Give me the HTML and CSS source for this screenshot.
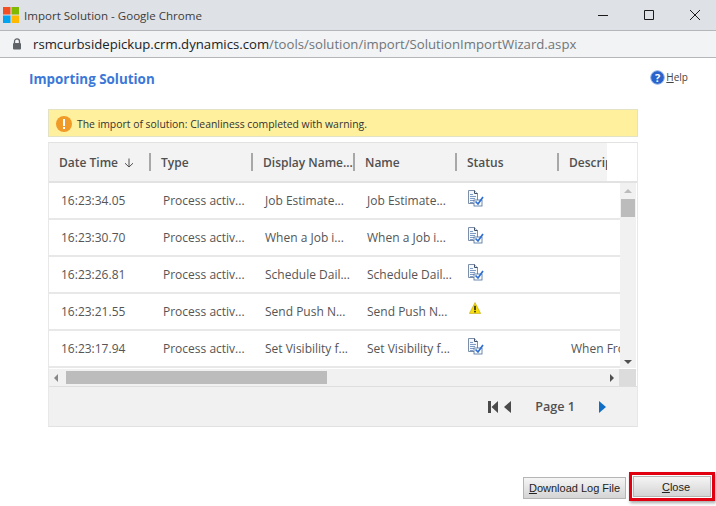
FILE: index.html
```html
<!DOCTYPE html>
<html lang="en">
<head>
    <meta charset="UTF-8">
    <title>Import Solution - Google Chrome</title>
    <link rel="stylesheet" href="styles.css">
</head>
<body>
    <div class="titlebar">
        <svg class="ms-logo" width="16" height="16" viewBox="0 0 16 16">
            <rect x="0" y="0" width="7.5" height="7.5" fill="#f25022"/>
            <rect x="8.5" y="0" width="7.5" height="7.5" fill="#7fba00"/>
            <rect x="0" y="8.5" width="7.5" height="7.5" fill="#00a4ef"/>
            <rect x="8.5" y="8.5" width="7.5" height="7.5" fill="#ffb900"/>
        </svg>
        <span class="window-title">Import Solution - Google Chrome</span>
        <div class="window-buttons">
            <svg width="12" height="12" viewBox="0 0 12 12"><path d="M1 6.5h10" stroke="#1a1a1a" fill="none"/></svg>
            <svg width="12" height="12" viewBox="0 0 12 12"><path d="M1.5 1.5h9v9h-9z" stroke="#1a1a1a" fill="none"/></svg>
            <svg width="12" height="12" viewBox="0 0 12 12"><path d="M1 1l10 10M11 1L1 11" stroke="#1a1a1a" fill="none"/></svg>
        </div>
    </div>
    <div class="addressbar">
        <svg class="lock" width="10" height="12" viewBox="0 0 10 12">
            <path d="M2.5 5V3.4a2.5 2.5 0 0 1 5 0V5" stroke="#5f6368" stroke-width="1.3" fill="none"/>
            <rect x="1" y="5" width="8" height="6.5" rx="1" fill="#5f6368"/>
        </svg>
        <span class="url"><span class="url-host">rsmcurbsidepickup.crm.dynamics.com</span>/tools/solution/import/SolutionImportWizard.aspx</span>
    </div>

    <div class="page">
        <div class="page-head">
            <h1>Importing Solution</h1>
            <a class="help" href="#">
                <svg width="15" height="15" viewBox="0 0 15 15">
                    <circle cx="7.5" cy="7.5" r="6.8" fill="#2a63c9" stroke="#8fb2ea"/>
                    <text x="7.5" y="11.5" class="help-mark">?</text>
                </svg>
                <span><u>H</u>elp</span>
            </a>
        </div>

        <div class="banner">
            <svg width="16" height="16" viewBox="0 0 16 16">
                <circle cx="8" cy="8" r="8" fill="#f09a27"/>
                <rect x="7" y="3" width="2" height="7" fill="#fff"/>
                <rect x="7" y="11" width="2" height="2" fill="#fff"/>
            </svg>
            <span>The import of solution: Cleanliness completed with warning.</span>
        </div>

        <div class="grid">
            <div class="grid-head">
                <div class="head-cells">
                    <div class="hcell hcell-first">Date Time<svg class="sort" width="10" height="10" viewBox="0 0 10 10"><path d="M5 .5v8.5M1 5.2L5 9l4-3.800" stroke="#505050" fill="none"/></svg></div>
                    <div class="hcell">Type</div>
                    <div class="hcell">Display Name...</div>
                    <div class="hcell">Name</div>
                    <div class="hcell">Status</div>
                    <div class="hcell">Description</div>
                </div>
                <div class="head-corner"></div>
            </div>

            <div class="grid-body">
                <div class="rows">
                    <div class="row">
                        <div class="cell">16:23:34.05</div>
                        <div class="cell">Process activ...</div>
                        <div class="cell">Job Estimate...</div>
                        <div class="cell">Job Estimate...</div>
                        <div class="cell"><svg class="doc-icon" width="17" height="17" viewBox="0 0 17 17"><use href="#doc-ok"/></svg></div>
                        <div class="cell"></div>
                    </div>
                    <div class="row">
                        <div class="cell">16:23:30.70</div>
                        <div class="cell">Process activ...</div>
                        <div class="cell">When a Job i...</div>
                        <div class="cell">When a Job i...</div>
                        <div class="cell"><svg class="doc-icon" width="17" height="17" viewBox="0 0 17 17"><use href="#doc-ok"/></svg></div>
                        <div class="cell"></div>
                    </div>
                    <div class="row">
                        <div class="cell">16:23:26.81</div>
                        <div class="cell">Process activ...</div>
                        <div class="cell">Schedule Dail...</div>
                        <div class="cell">Schedule Dail...</div>
                        <div class="cell"><svg class="doc-icon" width="17" height="17" viewBox="0 0 17 17"><use href="#doc-ok"/></svg></div>
                        <div class="cell"></div>
                    </div>
                    <div class="row">
                        <div class="cell">16:23:21.55</div>
                        <div class="cell">Process activ...</div>
                        <div class="cell">Send Push N...</div>
                        <div class="cell">Send Push N...</div>
                        <div class="cell">
                            <svg class="warn-icon" width="12" height="12" viewBox="0 0 12 12">
                                <path d="M6 .5L11.700 11.500H.3z" fill="#f7dd0b" stroke="#b59c00" stroke-width=".5"/>
                                <rect x="5.200" y="3.800" width="1.600" height="4.200" fill="#222"/>
                                <rect x="5.200" y="8.800" width="1.600" height="1.600" fill="#222"/>
                            </svg>
                        </div>
                        <div class="cell"></div>
                    </div>
                    <div class="row">
                        <div class="cell">16:23:17.94</div>
                        <div class="cell">Process activ...</div>
                        <div class="cell">Set Visibility f...</div>
                        <div class="cell">Set Visibility f...</div>
                        <div class="cell"><svg class="doc-icon" width="17" height="17" viewBox="0 0 17 17"><use href="#doc-ok"/></svg></div>
                        <div class="cell cell-desc">When From</div>
                    </div>
                </div>
                <div class="vscroll">
                    <span class="arrow arrow-up"></span>
                    <div class="vthumb"></div>
                    <span class="arrow arrow-down"></span>
                </div>
            </div>

            <div class="hscroll">
                <span class="arrow arrow-left"></span>
                <div class="hthumb"></div>
                <span class="arrow arrow-right"></span>
                <div class="scroll-corner"></div>
            </div>

            <div class="pager">
                <svg width="10" height="14" viewBox="0 0 10 14" class="pager-first"><path d="M0 1h3v12H0zM3.500 7L10 1v12z" fill="#4a4a4a"/></svg>
                <svg width="9" height="14" viewBox="0 0 9 14" class="pager-prev"><path d="M8 1v12L1 7z" fill="#4a4a4a"/></svg>
                <span class="page-label">Page 1</span>
                <svg width="9" height="14" viewBox="0 0 9 14" class="pager-next"><path d="M1 1v12l7-6z" fill="#0f6fc6"/></svg>
            </div>
        </div>

        <div class="actions">
            <button class="btn btn-log" type="button"><u>D</u>ownload Log File</button>
            <div class="close-mark">
                <button class="btn btn-close" type="button"><u>C</u>lose</button>
            </div>
        </div>
    </div>

    <svg width="0" height="0" class="defs">
        <defs>
            <g id="doc-ok">
                <path d="M1.500.5h6l3 3v10h-9z" fill="#f4f7fb" stroke="#7d8ea8"/>
                <path d="M7.500.5v3h3" fill="#dfe6f0" stroke="#3f4f68"/>
                <path d="M3 4.500h3M3 6.500h6M3 8.500h5M3 10.500h4M3 12.500h3" stroke="#7f9cc4"/>
                <rect x="7" y="10" width="8" height="6" fill="#fff" stroke="#4a6b9c" stroke-width=".8"/>
                <path d="M8.500 11.500l2.500 2.500 5-7" stroke="#2f6fd0" stroke-width="1.700" fill="none"/>
            </g>
        </defs>
    </svg>
</body>
</html>
```

FILE: styles.css
```css
html, body {
    margin: 0;
    padding: 0;
    height: 100%;
}

body {
    width: 716px;
    height: 506px;
    overflow: hidden;
    display: flex;
    flex-direction: column;
    background: #fff;
    font-family: "Open Sans", "Noto Sans", sans-serif;
    color: #444;
}

.defs {
    display: none;
}

.titlebar {
    height: 30px;
    flex: none;
    display: flex;
    align-items: center;
    background: #dee1e6;
    border-bottom: 1px solid #b4b6ba;
    padding-left: 3px;
}

.ms-logo {
    margin-right: 5px;
}

.window-title {
    font-size: 11.55px;
    color: #3c3c3c;
}

.window-buttons {
    margin-left: auto;
    display: flex;
    gap: 34px;
    padding-right: 15px;
}

.addressbar {
    height: 26px;
    flex: none;
    display: flex;
    align-items: center;
    background: #f1f3f4;
    border-bottom: 1px solid #b4b6ba;
    padding-left: 12px;
}

.lock {
    margin-right: 11px;
}

.url {
    font-size: 13.17px;
    color: #70757a;
}

.url-host {
    color: #202124;
}

.page {
    flex: 1;
    display: flex;
    flex-direction: column;
    position: relative;
}

.page-head {
    display: flex;
    justify-content: space-between;
    padding: 12px 28px 0 29px;
    height: 39px;
}

h1 {
    margin: 0;
    font-size: 13.4px;
    line-height: 18px;
    font-weight: 700;
    color: #3b78d8;
}

.help {
    display: flex;
    align-items: flex-start;
    gap: 1px;
    font-size: 10px;
    line-height: 14px;
    color: #444;
    text-decoration: none;
}

.help-mark {
    font-size: 11px;
    font-weight: 700;
    fill: #fff;
    text-anchor: middle;
}

.banner {
    margin-left: 48px;
    width: 590px;
    height: 28px;
    box-sizing: border-box;
    display: flex;
    align-items: center;
    gap: 5px;
    padding-left: 7px;
    padding-top: 1px;
    background: #fff09e;
    border: 1px solid #e4e2c4;
    font-size: 10.4px;
    color: #333;
}

.grid {
    margin: 5px 0 0 48px;
    width: 590px;
    box-sizing: border-box;
    border-top: 1px solid #e2e2e2;
    border-left: 1px solid #e8e8e8;
    border-right: 1px solid #e8e8e8;
    border-bottom: 1px solid #e2e2e2;
}

.grid-head {
    display: flex;
    height: 38px;
    background: #f3f3f3;
    border-bottom: 2px solid #e2e2e2;
}

.head-cells {
    width: 558px;
    display: flex;
    overflow: hidden;
}

.head-corner {
    flex: 1;
    background: #fff;
}

.hcell {
    flex: none;
    width: 102px;
    box-sizing: border-box;
    padding-left: 12px;
    font-size: 12px;
    font-weight: 600;
    line-height: 40px;
    white-space: nowrap;
    color: #505050;
    position: relative;
}

.hcell-first {
    width: 100px;
    padding-left: 10px;
}

.hcell + .hcell::before {
    content: "";
    position: absolute;
    left: 0;
    top: 10px;
    width: 2px;
    height: 18px;
    background: #a8a8a8;
}

.sort {
    margin-left: 6px;
    vertical-align: -1px;
}

.grid-body {
    display: flex;
    height: 185px;
}

.rows {
    width: 571px;
    overflow: hidden;
}

.row {
    display: flex;
    height: 37px;
    box-sizing: border-box;
    border-bottom: 2px solid #e8e8e8;
}

.cell {
    flex: none;
    width: 102px;
    box-sizing: border-box;
    padding-left: 12px;
    font-size: 12px;
    line-height: 36px;
    white-space: nowrap;
    overflow: hidden;
    color: #555;
}

.doc-icon {
    margin: 7px 0 0 -2px;
    display: block;
}

.warn-icon {
    margin: 8px 0 0 0;
    display: block;
}

.vscroll {
    flex: 1;
    display: flex;
    flex-direction: column;
    align-items: center;
    background: #f1f1f1;
    border-right: 1px solid #fff;
    padding: 6px 0 4px;
}

.vthumb {
    width: 14px;
    height: 18px;
    margin-top: 6px;
    background: #bcbcbc;
}

.arrow {
    display: block;
    width: 0;
    height: 0;
    border: 4px solid transparent;
}

.arrow-up {
    border-top: 0;
    border-bottom-color: #bbb;
}

.arrow-down {
    margin-top: auto;
    border-bottom: 0;
    border-top-color: #505050;
}

.hscroll {
    display: flex;
    align-items: center;
    height: 17px;
    background: #f1f1f1;
    border-bottom: 1px solid #dedede;
    padding-left: 5px;
    margin-top: 1px;
}

.arrow-left {
    border-left: 0;
    border-right-color: #888;
}

.hthumb {
    width: 261px;
    height: 13px;
    margin-left: 8px;
    background: #bcbcbc;
}

.arrow-right {
    margin-left: auto;
    border-right: 0;
    border-left-color: #505050;
}

.scroll-corner {
    width: 17px;
    align-self: stretch;
    margin-left: 5px;
    background: #dcdcdc;
    border-right: 1px solid #fff;
}

.pager {
    height: 39px;
    display: flex;
    align-items: center;
    justify-content: flex-end;
    background: #f1f1f1;
    padding-right: 30px;
}

.pager-first {
    margin-right: 5px;
}

.page-label {
    margin: 0 23px 0 23px;
    font-size: 12.6px;
    font-weight: 600;
    color: #505050;
}

.actions {
    position: absolute;
    right: 0;
    top: 414px;
    display: flex;
    align-items: flex-start;
}

.btn {
    font-family: "Liberation Sans", sans-serif;
    font-size: 11px;
    color: #222;
    border: 1px solid #b5b5b5;
    background: linear-gradient(#f5f5f5, #d4d4d4);
    padding: 0;
    margin: 0;
}

.btn-log {
    width: 103px;
    height: 22px;
    margin: 5px 3px 0 0;
}

.close-mark {
    border: 3px solid #e0000f;
    padding: 1px;
    margin-right: 1px;
    box-shadow: 1px 2px 3px rgba(0, 0, 0, 0.35);
}

.btn-close {
    display: block;
    width: 78px;
    height: 21px;
    padding-left: 8px;
}
```
